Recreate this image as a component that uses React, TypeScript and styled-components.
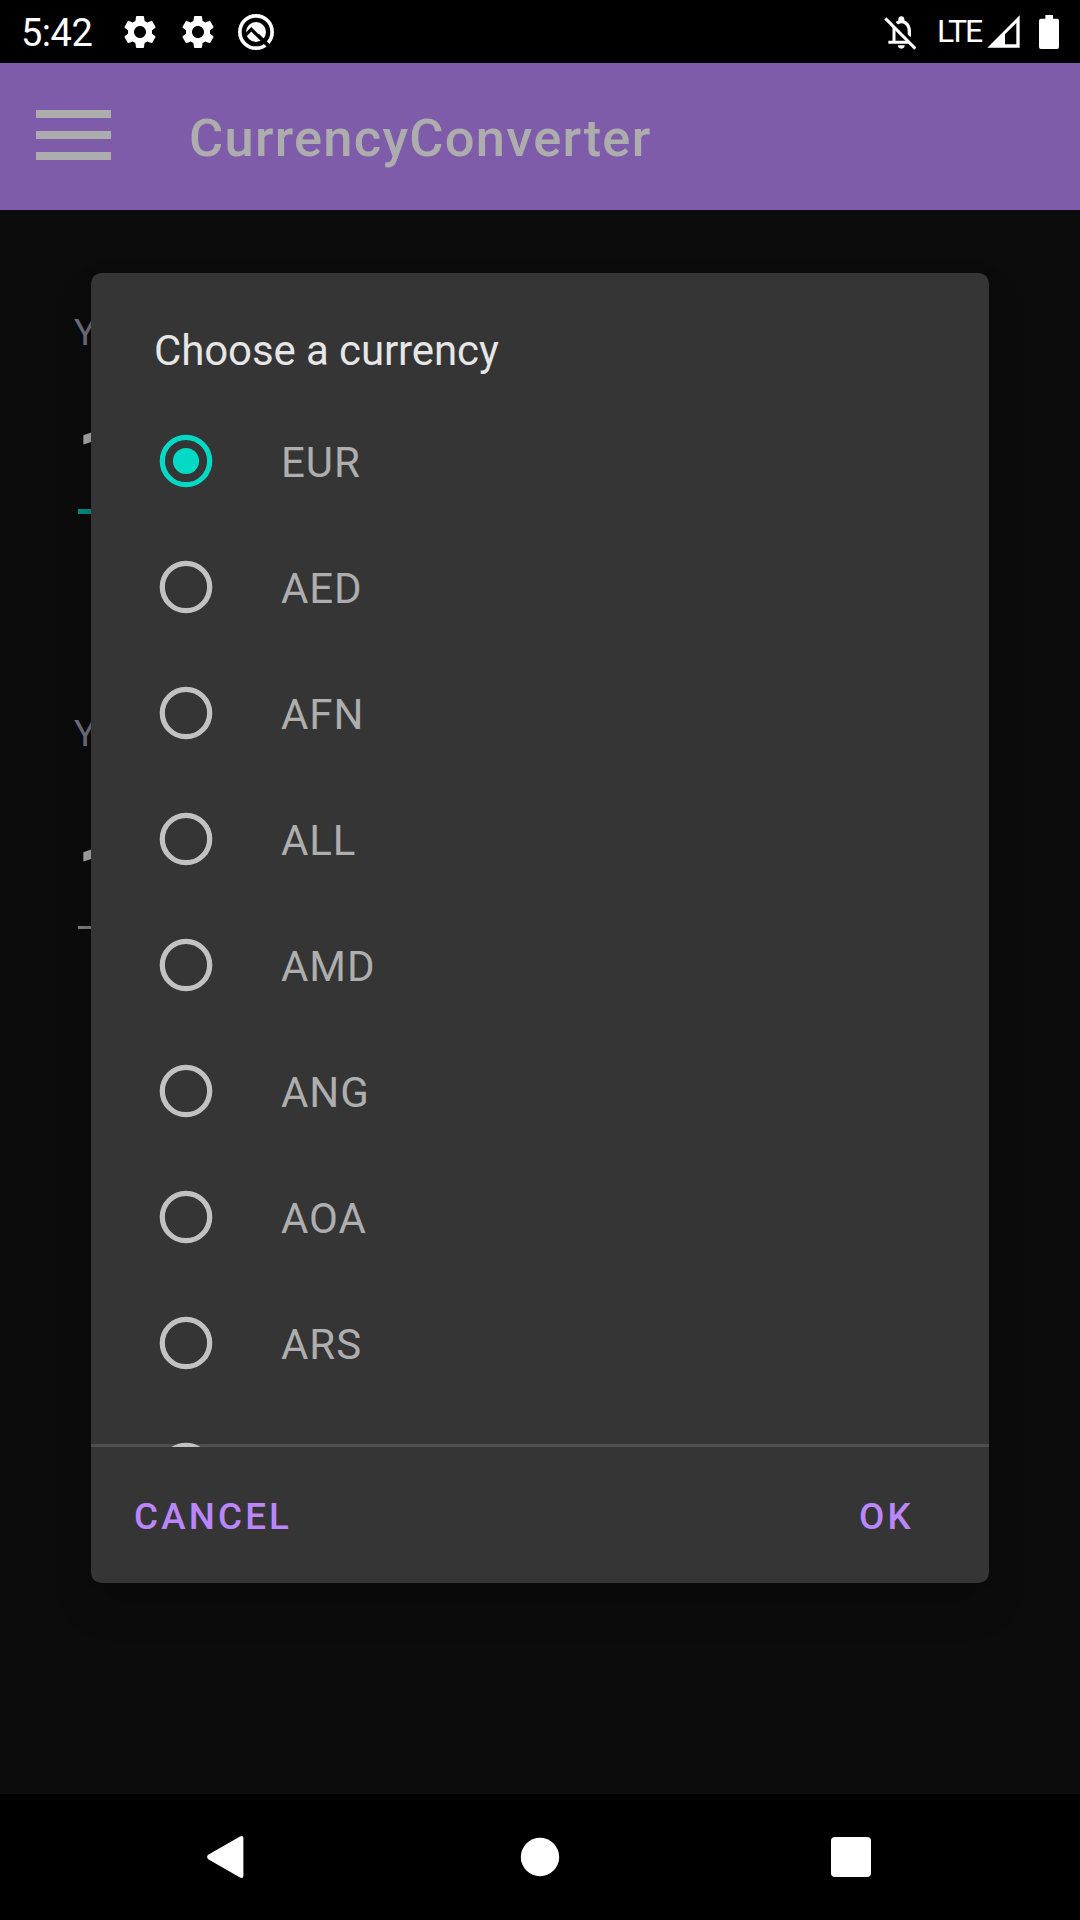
import React from "react";
import styled, { createGlobalStyle } from "styled-components";

const GlobalStyle = createGlobalStyle`
  *, *::before, *::after { box-sizing: border-box; }
  body { margin: 0; background: #0c0c0c; font-family: Roboto, "Noto Sans", sans-serif; }
  svg { display: block; flex: none; }
`;

const Screen = styled.div`
  position: relative;
  width: 1080px;
  height: 1920px;
  display: flex;
  flex-direction: column;
  overflow: hidden;
  background: #0c0c0c;
`;

const StatusBar = styled.header`
  flex: none;
  height: 63px;
  display: flex;
  justify-content: space-between;
  background: #000;
  color: #fff;
`;

const StatusGroup = styled.div`
  display: flex;
  align-items: center;
`;

const Clock = styled.span`
  width: 97px;
  margin-left: 21px;
  padding-top: 3px;
  font-size: 38px;
  line-height: 44px;
  letter-spacing: -0.5px;
`;

const Network = styled.span`
  width: 50px;
  margin-left: 19px;
  font-size: 32px;
  line-height: 38px;
  letter-spacing: -2px;
  padding-bottom: 1px;
`;

const AppBar = styled.div`
  flex: none;
  height: 147px;
  display: flex;
  align-items: center;
  background: #7f5caa;
`;

const MenuButton = styled.button`
  display: flex;
  flex-direction: column;
  gap: 13px;
  width: 75px;
  margin: 0 0 3px 36px;
  padding: 0;
  border: 0;
  background: none;
`;

const MenuLine = styled.span`
  height: 8px;
  background: #adadad;
`;

const AppTitle = styled.h1`
  margin: 0 0 0 78px;
  padding-top: 3px;
  font-size: 52.5px;
  font-weight: 500;
  line-height: 62px;
  letter-spacing: 0.0233em;
  color: #adadad;
`;

const Content = styled.main`
  flex: 1;
  display: flex;
  flex-direction: column;
  padding: 101px 100px 0 74px;
`;

const Field = styled.div`
  display: flex;
  flex-direction: column;
  height: 401px;
`;

const FieldLabel = styled.span`
  font-size: 37px;
  line-height: 44px;
  color: #716d80;
`;

const FieldInput = styled.div<{ $focused?: boolean }>`
  height: ${(p) => (p.$focused ? 159 : 173)}px;
  margin-left: 4px;
  padding-top: ${(p) => (p.$focused ? 54 : 70)}px;
  border-bottom: ${(p) => (p.$focused ? "5px solid #028c7f" : "3px solid #7c7c7c")};
  font-size: 84px;
  font-weight: 700;
  line-height: 98px;
  text-indent: -1.5px;
  color: #a8a8a8;
`;

const NavBar = styled.nav`
  flex: none;
  height: 126px;
  display: flex;
  align-items: center;
  justify-content: space-between;
  padding: 0 208px 0 207px;
  background: #000;
`;

const HomeButton = styled.div`
  padding-left: 4px;
`;

const Dialog = styled.section`
  position: absolute;
  top: 273px;
  left: 91px;
  width: 898px;
  height: 1310px;
  display: flex;
  flex-direction: column;
  overflow: hidden;
  border-radius: 10.5px;
  background: #353535;
  box-shadow: 0 22px 40px rgba(0, 0, 0, 0.16), 0 0 14px rgba(0, 0, 0, 0.08);
`;

const DialogTitle = styled.h2`
  flex: none;
  height: 125px;
  margin: 0;
  padding: 53px 63px 0;
  font-size: 42px;
  font-weight: 400;
  line-height: 50px;
  letter-spacing: -0.0025em;
  color: #e6e6e6;
`;

const OptionList = styled.div`
  position: relative;
  z-index: 1;
  flex: none;
  height: 1049px;
  overflow: hidden;
`;

const Divider = styled.div`
  flex: none;
  height: 3px;
  margin-top: -3px;
  background: #4f4f4f;
`;

const Option = styled.div`
  height: 126px;
  display: flex;
  align-items: center;
  padding-left: 68px;
`;

const RadioIcon = styled.svg<{ $checked: boolean }>`
  color: ${(p) => (p.$checked ? "#03dac5" : "#c2c2c2")};
`;

const OptionLabel = styled.span`
  margin-left: 68px;
  padding-top: 3px;
  font-size: 42px;
  line-height: 50px;
  letter-spacing: 0.022em;
  color: #aeaeae;
`;

const Actions = styled.footer`
  flex: 1;
  display: flex;
  align-items: center;
  justify-content: space-between;
  padding: 3px 75px 0 43px;
`;

const ActionButton = styled.button`
  padding: 0;
  border: 0;
  background: none;
  font: 500 36.75px/44px Roboto, sans-serif;
  letter-spacing: 0.0865em;
  color: #bb86fc;
`;

const Radio = ({ checked }: { checked: boolean }) => (
  <RadioIcon $checked={checked} width="54" height="54" viewBox="0 0 54 54">
    <circle cx="27" cy="27" r="23.7" fill="none" stroke="currentColor" strokeWidth="5.25" />
    {checked && <circle cx="27" cy="27" r="13.1" fill="currentColor" />}
  </RadioIcon>
);

const GearIcon = () => (
  <svg width="40" height="40" viewBox="0 0 24 24" fill="#fff">
    <path d="M19.14 12.94c.04-.3.06-.61.06-.94 0-.32-.02-.64-.07-.94l2.03-1.58c.18-.14.23-.41.12-.61l-1.92-3.32c-.12-.22-.37-.29-.59-.22l-2.39.96c-.5-.38-1.03-.7-1.62-.94l-.36-2.54c-.04-.24-.24-.41-.48-.41h-3.84c-.24 0-.43.17-.47.41l-.36 2.54c-.59.24-1.13.57-1.62.94l-2.39-.96c-.22-.08-.47 0-.59.22L2.74 8.87c-.12.21-.08.47.12.61l2.03 1.58c-.05.3-.09.63-.09.94s.02.64.07.94l-2.03 1.58c-.18.14-.23.41-.12.61l1.92 3.32c.12.22.37.29.59.22l2.39-.96c.5.38 1.03.7 1.62.94l.36 2.54c.05.24.24.41.48.41h3.84c.24 0 .44-.17.47-.41l.36-2.54c.59-.24 1.13-.56 1.62-.94l2.39.96c.22.08.47 0 .59-.22l1.92-3.32c.12-.22.07-.47-.12-.61l-2.01-1.58zM12 15.6c-1.98 0-3.6-1.62-3.6-3.6s1.62-3.6 3.6-3.6 3.6 1.62 3.6 3.6-1.62 3.6-3.6 3.6z" />
  </svg>
);

const SystemIcon = () => (
  <svg width="38" height="38" viewBox="0 0 114 114">
    <circle cx="57" cy="57" r="48.5" fill="none" stroke="#fff" strokeWidth="11" />
    <circle cx="57" cy="57" r="30" fill="#fff" />
    <path d="M22 70 43 49 106 111" fill="none" stroke="#000" strokeWidth="9.5" />
    <path d="M47 69 38 78 51 84 63 84Z" fill="#fff" />
    <path d="M62 66 104 106" stroke="#000" strokeWidth="10" />
  </svg>
);

const BellOffIcon = () => (
  <svg width="36" height="36" viewBox="66 40 108 108" fill="none" stroke="#fff">
    <path d="M102 82V124M85 125H148" strokeWidth="9" />
    <path d="M109 68C130 54 148 70 148 91V108" strokeWidth="10" />
    <path d="M115 60V56a9 9 0 0 1 18 0V60ZM114 134H134a10 10 0 0 1-20 0Z" fill="#fff" stroke="none" />
    <path d="M83 47 174 139" stroke="#000" strokeWidth="9" />
    <path d="M76 53 166 144" strokeWidth="9" />
  </svg>
);

const SignalIcon = () => (
  <svg width="33" height="33" viewBox="382 43 99 99">
    <path fill="#fff" fillRule="evenodd" d="M383 141 480 44V141ZM436 131H470V67L436 101Z" />
  </svg>
);

const BatteryIcon = () => (
  <svg width="20" height="34" viewBox="537 42 60 102" fill="#fff">
    <path d="M556 53V42H579V53H591Q597 53 597 59V138Q597 144 591 144H543Q537 144 537 138V59Q537 53 543 53Z" />
  </svg>
);

const LeftIcons = styled.div`
  display: flex;
  align-items: center;
  gap: 18px;
  margin-left: 2px;

  & > :last-child {
    margin-left: 1px;
  }
`;

const SignalSlot = styled.div`
  display: flex;
  align-items: center;
  gap: 19px;
  margin-right: 21px;
`;

const currencies = ["EUR", "AED", "AFN", "ALL", "AMD", "ANG", "AOA", "ARS", ""];

export default function App() {
  return (
    <>
      <GlobalStyle />
      <Screen>
        <StatusBar>
          <StatusGroup>
            <Clock>5:42</Clock>
            <LeftIcons>
              <GearIcon />
              <GearIcon />
              <SystemIcon />
            </LeftIcons>
          </StatusGroup>
          <StatusGroup>
            <BellOffIcon />
            <Network>LTE</Network>
            <SignalSlot>
              <SignalIcon />
              <BatteryIcon />
            </SignalSlot>
          </StatusGroup>
        </StatusBar>
        <AppBar>
          <MenuButton aria-label="Menu">
            <MenuLine />
            <MenuLine />
            <MenuLine />
          </MenuButton>
          <AppTitle>CurrencyConverter</AppTitle>
        </AppBar>
        <Content>
          <Field>
            <FieldLabel>Y</FieldLabel>
            <FieldInput $focused>1</FieldInput>
          </Field>
          <Field>
            <FieldLabel>Y</FieldLabel>
            <FieldInput>1</FieldInput>
          </Field>
        </Content>
        <NavBar>
          <svg width="38" height="44" viewBox="0 0 38 44" fill="#fff">
            <path d="M1.2 19.8 33 1.4Q36.4 0 36.4 3.2V40.8Q36.4 44 33 42.6L1.2 24.2Q-1 22 1.2 19.8Z" />
          </svg>
          <HomeButton>
            <svg width="40" height="40" viewBox="0 0 40 40" fill="#fff">
              <circle cx="20" cy="20" r="19.2" />
            </svg>
          </HomeButton>
          <svg width="42" height="42" viewBox="0 0 42 42" fill="#fff">
            <rect x="1" y="1" width="40" height="40" rx="4" />
          </svg>
        </NavBar>
        <Dialog role="dialog">
          <DialogTitle>Choose a currency</DialogTitle>
          <OptionList>
            {currencies.map((code, i) => (
              <Option key={i}>
                <Radio checked={i === 0} />
                <OptionLabel>{code}</OptionLabel>
              </Option>
            ))}
          </OptionList>
          <Divider />
          <Actions>
            <ActionButton>CANCEL</ActionButton>
            <ActionButton>OK</ActionButton>
          </Actions>
        </Dialog>
      </Screen>
    </>
  );
}
